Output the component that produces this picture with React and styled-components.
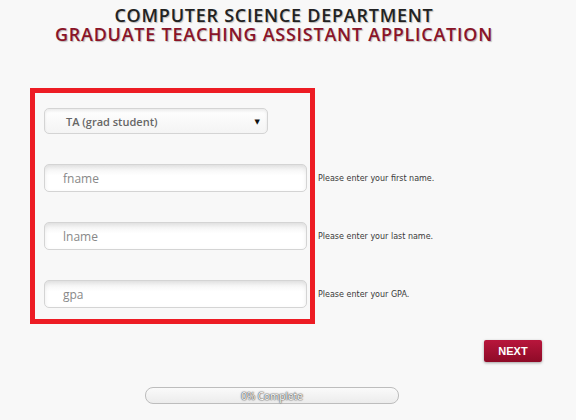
import React from 'react';
import styled, { createGlobalStyle } from 'styled-components';

const GlobalStyle = createGlobalStyle`
  html, body {
    margin: 0;
    padding: 0;
    background: #f8f8f8;
    font-family: 'Open Sans', 'DejaVu Sans', sans-serif;
  }
`;

const Page = styled.div`
  width: 576px;
  height: 420px;
  overflow: hidden;
`;

const Header = styled.div`
  width: 548px;
  text-align: center;
  padding-top: 6px;
`;

const HeadLine = styled.div`
  font-size: 18px;
  font-weight: 600;
  line-height: 19px;
  letter-spacing: 0.75px;
  white-space: nowrap;
  color: ${(p) => p.color};
  text-shadow: 1px 1px 1px rgba(0, 0, 0, 0.25);
`;

const Frame = styled.div`
  width: 266px;
  margin: 44px 0 0 30px;
  border: 5px solid #ed1c24;
  padding: 15px 0 11px 9px;
  display: flex;
  flex-direction: column;
  gap: 30px;
`;

const Row = styled.div`
  display: flex;
  align-items: center;
  gap: 11px;
`;

const Select = styled.div`
  width: 224px;
  height: 26px;
  flex: none;
  box-sizing: border-box;
  border: 1px solid #d4d4d4;
  border-radius: 5px;
  background: linear-gradient(#ffffff, #f4f4f4);
  box-shadow: inset 0 2px 3px rgba(0, 0, 0, 0.08);
  display: flex;
  align-items: center;
  justify-content: space-between;
  padding: 0 7px 0 0;
`;

const SelectText = styled.span`
  margin-left: 21px;
  font-size: 11px;
  font-weight: 600;
  color: #666;
`;

const Arrow = styled.span`
  font-size: 7px;
  color: #111;
`;

const Input = styled.div`
  width: 263px;
  height: 28px;
  flex: none;
  box-sizing: border-box;
  border: 1px solid #d4d4d4;
  border-radius: 5px;
  background: linear-gradient(#f0f0f0, #ffffff 40%);
  box-shadow: inset 0 2px 4px rgba(0, 0, 0, 0.08);
  display: flex;
  align-items: center;
  padding-left: 18px;
  font-size: 12px;
  color: #888;
`;

const Hint = styled.span`
  font-family: 'DejaVu Sans', sans-serif;
  font-size: 8px;
  color: #3a3a3a;
  white-space: nowrap;
`;

const Actions = styled.div`
  display: flex;
  justify-content: flex-end;
  padding: 16px 34px 0 0;
`;

const NextButton = styled.button`
  width: 58px;
  height: 22px;
  border: none;
  border-radius: 2px;
  background: linear-gradient(#b8163c, #8e0b27);
  box-shadow: 0 1px 3px rgba(0, 0, 0, 0.35);
  color: #fff;
  font-family: 'Liberation Sans', Arial, sans-serif;
  font-weight: bold;
  font-size: 11px;
`;

const Progress = styled.div`
  width: 254px;
  height: 17px;
  box-sizing: border-box;
  margin: 25px 0 0 145px;
  border: 1px solid #bdbdbd;
  border-radius: 8px;
  background: linear-gradient(#fafafa, #ececec);
  display: flex;
  align-items: center;
  justify-content: center;
  font-size: 10px;
  color: #fff;
  text-shadow: 0 0 2px #555, 0 0 1px #555, 0 0 1px #555;
`;

const fields = [
  { name: 'fname', hint: 'Please enter your first name.' },
  { name: 'lname', hint: 'Please enter your last name.' },
  { name: 'gpa', hint: 'Please enter your GPA.' },
];

export default function App() {
  return (
    <Page>
      <GlobalStyle />
      <Header>
        <HeadLine color="#222">COMPUTER SCIENCE DEPARTMENT</HeadLine>
        <HeadLine color="#8a1428">GRADUATE TEACHING ASSISTANT APPLICATION</HeadLine>
      </Header>
      <Frame>
        <Row>
          <Select>
            <SelectText>TA (grad student)</SelectText>
            <Arrow>▼</Arrow>
          </Select>
        </Row>
        {fields.map((f) => (
          <Row key={f.name}>
            <Input>{f.name}</Input>
            <Hint>{f.hint}</Hint>
          </Row>
        ))}
      </Frame>
      <Actions>
        <NextButton>NEXT</NextButton>
      </Actions>
      <Progress>0% Complete</Progress>
    </Page>
  );
}
